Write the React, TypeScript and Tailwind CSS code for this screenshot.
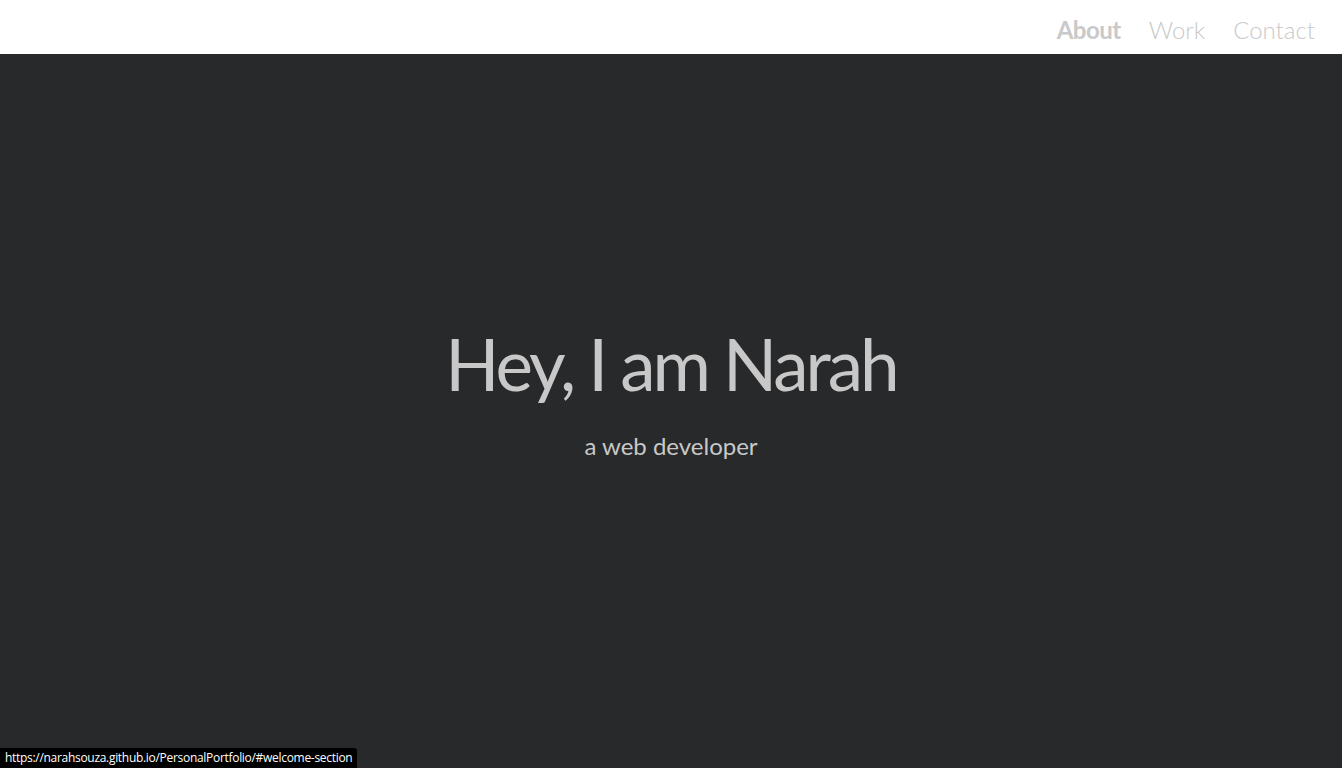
export default function App() {
  return (
    <div className="w-[1342px] h-[768px] flex flex-col bg-[#28292b] relative overflow-hidden">
      <header className="h-[54px] bg-white flex justify-end items-center pt-[6px] pr-[27px] gap-[28px] font-['Lato',sans-serif] text-[24px] text-[#c9c9c9]">
        <a className="font-bold tracking-[-0.5px]">About</a>
        <a className="font-light">Work</a>
        <a className="font-light">Contact</a>
      </header>
      <main className="flex-1 flex flex-col items-center justify-center pb-[36px] font-['Lato',sans-serif] text-[#c8c8c8]">
        <h1 className="text-[71px] leading-none tracking-[-3px]">Hey, I am Narah</h1>
        <p className="text-[24px] mt-[35px] leading-none">a web developer</p>
      </main>
      <div className="absolute left-0 bottom-0 h-[20px] w-[357px] bg-black text-white text-[12px] pl-[5px] flex items-center rounded-tr-[3px] font-['Open_Sans',sans-serif] tracking-[-0.3px]">
        https://narahsouza.github.io/PersonalPortfolio/#welcome-section
      </div>
    </div>
  );
}
